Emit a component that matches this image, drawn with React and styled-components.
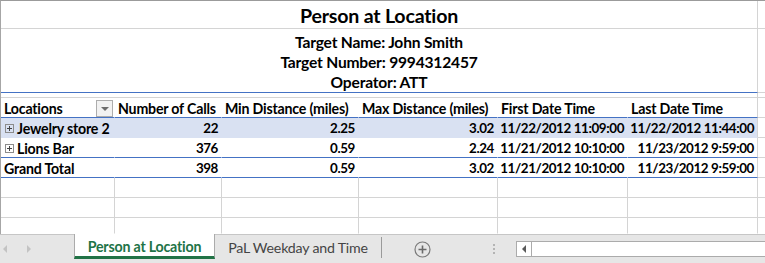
import React from 'react';
import styled, { createGlobalStyle } from 'styled-components';

const GlobalStyle = createGlobalStyle`
  html, body {
    margin: 0;
    padding: 0;
    background: #ffffff;
  }
  body {
    font-family: Lato, "Liberation Sans", sans-serif;
    color: #000;
  }
`;

const Window = styled.div`
  width: 765px;
  height: 263px;
  overflow: hidden;
  display: flex;
  flex-direction: column;
`;

const Sheet = styled.div`
  height: 234px;
  border-top: 1px solid #9b9b9b;
  border-left: 1px solid #a6a6a6;
  box-sizing: border-box;
  overflow: hidden;
`;

const Row = styled.div`
  display: grid;
  grid-template-columns: 114px 107px 137px 139px 130px 130px 1fr;
  height: ${p => p.$h}px;
`;

const Cell = styled.div`
  box-sizing: border-box;
  min-width: 0;
  display: flex;
  align-items: center;
  justify-content: ${p => (p.$right ? 'flex-end' : 'flex-start')};
  padding: ${p => (p.$right ? '1px 3px 0 0' : '1px 0 0 3px')};
  border-bottom: 1px solid ${p => p.$line || 'transparent'};
  border-right: 1px solid ${p => (p.$edge ? '#d4d4d4' : p.$grid ? '#d4d4d4' : 'transparent')};
  background: ${p => p.$bg || 'transparent'};
  font-weight: 700;
  font-size: ${p => (p.$right ? '13.4px' : '14.2px')};
  letter-spacing: ${p => (p.$right ? '-0.4px' : '-0.2px')};
  white-space: nowrap;
  grid-column: ${p => p.$span || 'auto'};
`;

const Tail = styled.div`
  border-bottom: 1px solid ${p => (p.$none ? 'transparent' : '#d4d4d4')};
`;

const Title = styled(Cell)`
  justify-content: center;
  font-size: 19.6px;
  letter-spacing: -0.2px;
  padding: 1px 0 0;
`;

const Info = styled(Cell)`
  flex-direction: column;
  justify-content: flex-start;
  align-items: center;
  padding: 3px 0 0;
  font-size: 15.6px;
  letter-spacing: -0.2px;
  line-height: 20px;
`;

const Header = styled(Cell)`
  justify-content: space-between;
  padding-right: 1px;
`;

const FilterButton = styled.span`
  width: 17px;
  height: 17px;
  box-sizing: border-box;
  border: 1px solid #adadad;
  background: #f2f2f2;
  display: flex;
  align-items: center;
  justify-content: center;
  &::after {
    content: '';
    border-left: 4px solid transparent;
    border-right: 4px solid transparent;
    border-top: 4px solid #6d6d6d;
    margin-top: 1px;
  }
`;

const Expand = styled.span`
  width: 9px;
  height: 9px;
  box-sizing: border-box;
  border: 1px solid #8c8c8c;
  margin: 0 3px 0 1px;
  position: relative;
  flex: none;
  &::before {
    content: '';
    position: absolute;
    left: 1px;
    right: 1px;
    top: 3px;
    height: 1px;
    background: #444;
  }
  &::after {
    content: '';
    position: absolute;
    top: 1px;
    bottom: 1px;
    left: 3px;
    width: 1px;
    background: #444;
  }
`;

const TabBar = styled.div`
  height: 29px;
  box-sizing: border-box;
  border-top: 1px solid #c6c6c6;
  background: #e6e6e6;
  display: flex;
  align-items: flex-start;
  font-family: Lato, "Liberation Sans", sans-serif;
`;

const Arrows = styled.div`
  width: 74px;
  height: 28px;
  display: flex;
  align-items: center;
  gap: 20px;
  padding-left: 3px;
  box-sizing: border-box;
`;

const Arrow = styled.span`
  width: 0;
  height: 0;
  border-top: 4px solid transparent;
  border-bottom: 4px solid transparent;
  ${p => (p.$left ? 'border-right: 4px solid #c3c3c3;' : 'border-left: 4px solid #c3c3c3;')}
`;

const Tab = styled.div`
  box-sizing: border-box;
  width: ${p => p.$w}px;
  margin-top: ${p => (p.$active ? '-1px' : '2px')};
  display: flex;
  align-items: center;
  justify-content: center;
  font-size: 14.2px;
  letter-spacing: -0.2px;
  white-space: nowrap;
  ${p =>
    p.$active
      ? `
    height: 25px;
    background: #ffffff;
    color: #217346;
    font-weight: 700;
    border-left: 1px solid #ababab;
    border-right: 1px solid #ababab;
    border-bottom: 3px solid #217346;
    padding-top: 2px;
  `
      : `
    height: 21px;
    color: #444444;
    border-right: 1px solid #9a9a9a;
  `}
`;

const AddArea = styled.div`
  width: 90px;
  height: 28px;
  display: flex;
  align-items: center;
  padding-left: 32px;
  box-sizing: border-box;
`;

const Dots = styled.div`
  width: 44px;
  height: 28px;
  display: flex;
  flex-direction: column;
  align-items: center;
  justify-content: center;
  gap: 2px;
  span {
    width: 2px;
    height: 2px;
    background: #b4b4b4;
  }
`;

const Scroll = styled.div`
  flex: 1;
  margin-top: 6px;
  height: 16px;
  box-sizing: border-box;
  border: 1px solid #ababab;
  border-right: none;
  background: #fff;
  display: flex;
`;

const ScrollButton = styled.div`
  width: 14px;
  border-right: 1px solid #ababab;
  display: flex;
  align-items: center;
  justify-content: center;
  &::after {
    content: '';
    border-top: 4px solid transparent;
    border-bottom: 4px solid transparent;
    border-right: 4px solid #5a5a5a;
  }
`;

const BLUE = '#4472c4';
const GRID = '#d4d4d4';

const rows = [
  { loc: 'Jewelry store 2', calls: '22', min: '2.25', max: '3.02', first: '11/22/2012 11:09:00', last: '11/22/2012 11:44:00', bg: '#d9e1f2', line: 'transparent', expand: true },
  { loc: 'Lions Bar', calls: '376', min: '0.59', max: '2.24', first: '11/21/2012 10:10:00', last: '11/23/2012 9:59:00', line: BLUE, expand: true },
  { loc: 'Grand Total', calls: '398', min: '0.59', max: '3.02', first: '11/21/2012 10:10:00', last: '11/23/2012 9:59:00', line: BLUE },
];

const headers = ['Number of Calls', 'Min Distance (miles)', 'Max Distance (miles)', 'First Date Time', 'Last Date Time'];

function EmptyRow({ h, last }) {
  return (
    <Row $h={h}>
      {[0, 1, 2, 3, 4, 5].map(i => (
        <Cell key={i} $grid $line={last ? 'transparent' : GRID} />
      ))}
      <Tail $none={last} />
    </Row>
  );
}

export default function App() {
  return (
    <>
      <GlobalStyle />
      <Window>
        <Sheet>
          <Row $h={28}>
            <Title $span="1 / 7" $edge $line={GRID}>Person at Location</Title>
            <Tail />
          </Row>
          <Row $h={64}>
            <Info $span="1 / 7" $edge $line={BLUE}>
              <div>Target Name: John Smith</div>
              <div>Target Number: 9994312457</div>
              <div>Operator: ATT</div>
            </Info>
            <Tail />
          </Row>
          <Row $h={5}>
            <Cell $span="1 / 7" $edge $line={GRID} />
            <Tail />
          </Row>
          <Row $h={20}>
            <Header $line={BLUE}>
              Locations
              <FilterButton />
            </Header>
            {headers.map((h, i) => (
              <Cell key={h} $line={BLUE} $edge={i === 4}>{h}</Cell>
            ))}
            <Tail />
          </Row>
          {rows.map(r => (
            <Row $h={20} key={r.loc}>
              <Cell $line={r.line} $bg={r.bg}>
                {r.expand && <Expand />}
                {r.loc}
              </Cell>
              <Cell $right $line={r.line} $bg={r.bg}>{r.calls}</Cell>
              <Cell $right $line={r.line} $bg={r.bg}>{r.min}</Cell>
              <Cell $right $line={r.line} $bg={r.bg}>{r.max}</Cell>
              <Cell $right $line={r.line} $bg={r.bg}>{r.first}</Cell>
              <Cell $right $edge $line={r.line} $bg={r.bg}>{r.last}</Cell>
              <Tail />
            </Row>
          ))}
          <EmptyRow h={20} />
          <EmptyRow h={20} />
          <EmptyRow h={16} last />
        </Sheet>
        <TabBar>
          <Arrows>
            <Arrow $left />
            <Arrow />
          </Arrows>
          <Tab $active $w={141}>Person at Location</Tab>
          <Tab $w={167}>PaL Weekday and Time</Tab>
          <AddArea>
            <svg width="17" height="17" viewBox="0 0 17 17">
              <circle cx="8.5" cy="8.5" r="7.5" fill="none" stroke="#7a7a7a" strokeWidth="1.2" />
              <path d="M8.5 4.5v8M4.5 8.5h8" stroke="#6a6a6a" strokeWidth="1.6" />
            </svg>
          </AddArea>
          <Dots>
            <span />
            <span />
            <span />
          </Dots>
          <Scroll>
            <ScrollButton />
          </Scroll>
        </TabBar>
      </Window>
    </>
  );
}
